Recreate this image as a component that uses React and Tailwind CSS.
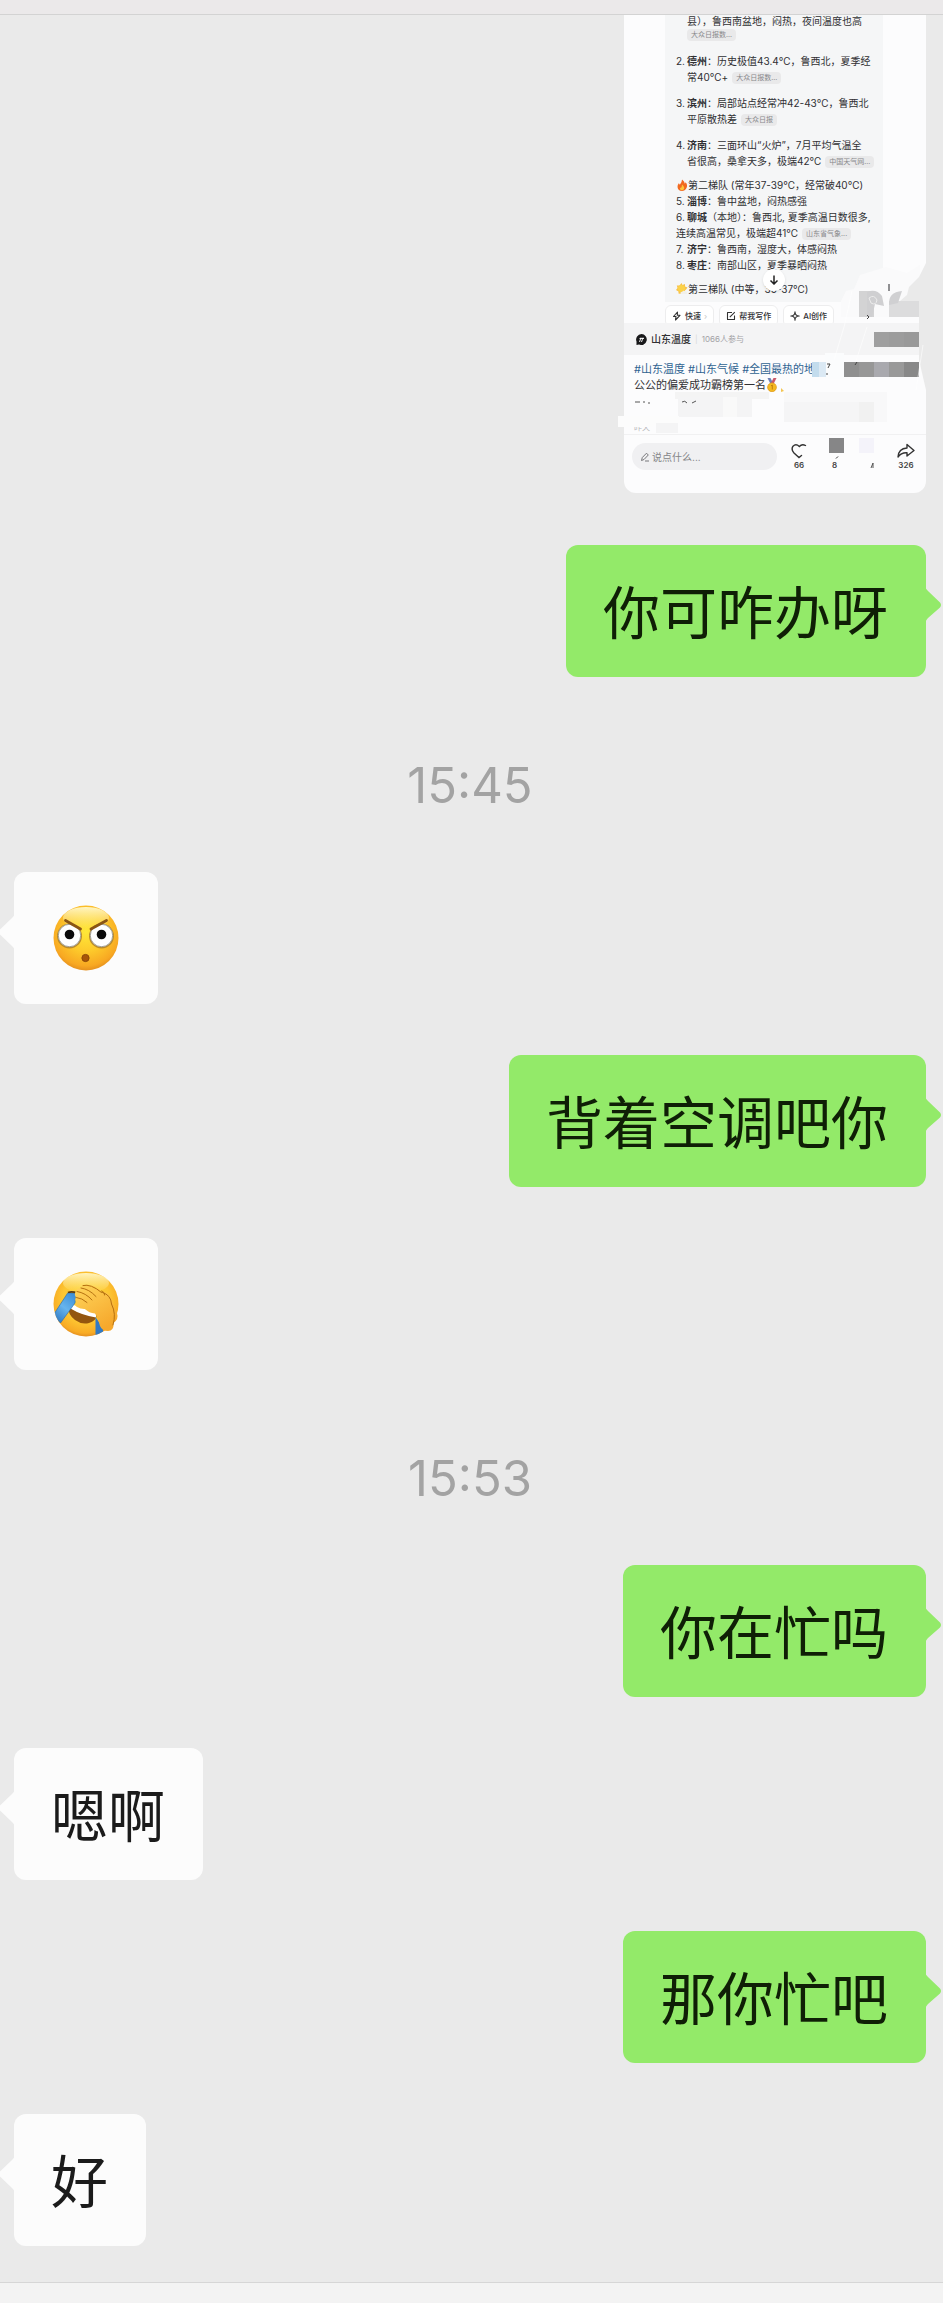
const messages = [
  { from: "me", text: "你可咋办呀" },
  { time: "15:45" },
  { from: "them", emoji: "stare" },
  { from: "me", text: "背着空调吧你" },
  { from: "them", emoji: "facepalm" },
  { time: "15:53" },
  { from: "me", text: "你在忙吗" },
  { from: "them", text: "嗯啊" },
  { from: "me", text: "那你忙吧" },
  { from: "them", text: "好" },
];

const StareEmoji = () => (
  <svg viewBox="0 0 66 66" className="w-[66px] h-[66px]" role="img" aria-label="瞪眼">
    <defs>
      <radialGradient id="stareFace" cx="50%" cy="40%" r="62%">
        <stop offset="0" stopColor="#ffe838" />
        <stop offset="0.5" stopColor="#fdc92b" />
        <stop offset="0.85" stopColor="#f8a822" />
        <stop offset="1" stopColor="#e08a1c" />
      </radialGradient>
      <linearGradient id="stareShine" x1="0" y1="0" x2="0" y2="1">
        <stop offset="0" stopColor="#fff6c4" />
        <stop offset="1" stopColor="#fff6a0" stopOpacity="0" />
      </linearGradient>
    </defs>
    <circle cx="33" cy="33" r="32.5" fill="url(#stareFace)" />
    <ellipse cx="33" cy="13" rx="23" ry="11" fill="url(#stareShine)" />
    <circle cx="16.5" cy="31" r="12.5" fill="#b98a2c" />
    <circle cx="48.5" cy="31" r="12.5" fill="#b98a2c" />
    <circle cx="16.5" cy="30.5" r="11.2" fill="#fff" stroke="#a3a29a" strokeWidth="1" />
    <circle cx="48.5" cy="30.5" r="11.2" fill="#fff" stroke="#a3a29a" strokeWidth="1" />
    <circle cx="16.5" cy="29.5" r="4.8" fill="#0b0b0b" />
    <circle cx="48.5" cy="29.5" r="4.8" fill="#0b0b0b" />
    <path d="M12.5 15.5L27.5 24M53.5 15.5L38 24" stroke="#8a5514" strokeWidth="2.8" strokeLinecap="round" />
    <circle cx="32.5" cy="53" r="3.6" fill="#a85508" stroke="#8b4708" strokeWidth="1" />
  </svg>
);

const FacepalmEmoji = () => (
  <svg viewBox="0 0 66 66" className="w-[66px] h-[66px]" role="img" aria-label="捂脸">
    <defs>
      <radialGradient id="palmFace" cx="50%" cy="42%" r="60%">
        <stop offset="0" stopColor="#ffdc3c" />
        <stop offset="0.6" stopColor="#fdc632" />
        <stop offset="0.88" stopColor="#f8ab25" />
        <stop offset="1" stopColor="#dd861f" />
      </radialGradient>
      <linearGradient id="palmShine" x1="0" y1="0" x2="0" y2="1">
        <stop offset="0" stopColor="#fff3bd" />
        <stop offset="1" stopColor="#fff09a" stopOpacity="0" />
      </linearGradient>
      <linearGradient id="palmTear" x1="0.8" y1="0" x2="0.2" y2="1">
        <stop offset="0" stopColor="#3d8fd6" />
        <stop offset="0.5" stopColor="#66b4ee" />
        <stop offset="1" stopColor="#2f77c0" />
      </linearGradient>
      <linearGradient id="palmHand" x1="0" y1="0" x2="0.6" y2="1">
        <stop offset="0" stopColor="#ffd65c" />
        <stop offset="1" stopColor="#f6a82c" />
      </linearGradient>
      <clipPath id="palmClip">
        <circle cx="33" cy="33" r="32.5" />
      </clipPath>
    </defs>
    <circle cx="33" cy="33" r="32.5" fill="url(#palmFace)" />
    <ellipse cx="33" cy="12" rx="23" ry="10" fill="url(#palmShine)" />
    <g clipPath="url(#palmClip)">
      <path d="M15 35Q28 45 44 44Q43 50 36 52Q29 54 22 49Q15 44 15 35Z" fill="#94560e" />
      <path d="M18 33L43 42V46.500Q28 44 17.500 37.500Z" fill="#fff" />
      <path d="M15 21.500L23 22.500L22 32L7.500 52L0 44.500Z" fill="url(#palmTear)" stroke="#2868a8" strokeWidth="0.6" />
      <path d="M15 21.500Q19 20 24 22" stroke="#5b3a10" strokeWidth="1.800" fill="none" />
      <path d="M42.500 46L50 57V66H42.500Z" fill="#3179c4" />
    </g>
    <path
      d="M23.500 19Q24 17 28 17Q29 13 35 14Q42 14 49 21Q55 20 58 27Q61 34 64 42Q66 48 60.500 52Q61 60 55 60Q49 60 47 55Q45 47 42 42.500Q36 42 32 38Q27 38 24 36Q21 34 24 31.500Q21 29 23 26.500Q20.500 23 23.500 19Z"
      fill="url(#palmHand)"
    />
    <path
      d="M28 17Q36 18 43 25.500M30 14.500Q38 12.500 48.500 21.500M24 20.500Q33 22 39 29M23.500 26.500Q29 27 34 31.500M49.500 21.500Q58 24 58.500 33Q63.500 43 60 54M48.500 20Q52 21 51.500 24"
      fill="none"
      stroke="#b5700f"
      strokeWidth="1"
      strokeLinecap="round"
    />
  </svg>
);

const Tail = ({ mine }) =>
  mine ? (
    <svg viewBox="0 0 16 36" className="absolute left-full top-[42px] -ml-px w-4 h-9" aria-hidden="true">
      <path d="M0 0Q1 2 3 4L15 15.500Q17 18 15 20.500L3 31Q1 33 0 36Z" fill="#93ea69" />
    </svg>
  ) : (
    <svg viewBox="0 0 16 36" className="absolute right-full top-[42px] -mr-px w-4 h-9" aria-hidden="true">
      <path d="M16 0Q15 2 13 4L1 15.500Q-1 18 1 20.500L13 32Q15 34 16 36Z" fill="#fcfcfc" />
    </svg>
  );

const Bubble = ({ message }) => {
  const mine = message.from === "me";
  return (
    <div className={mine ? "flex justify-end" : "flex justify-start"}>
      <div
        className={`relative flex items-center h-[132px] rounded-xl ${
          mine ? "bg-[#93ea69] text-[#0f1f06]" : "bg-[#fcfcfc] text-[#1b1b1b]"
        } ${message.emoji ? "px-[39px]" : "pl-[37px] pr-[38px] pb-1"}`}
      >
        <Tail mine={mine} />
        {message.emoji === "stare" && <StareEmoji />}
        {message.emoji === "facepalm" && <FacepalmEmoji />}
        {message.text && <p className="text-[57px] leading-[80px] whitespace-nowrap">{message.text}</p>}
      </div>
    </div>
  );
};

const Source = ({ children }) => (
  <span className="inline-flex items-center h-3 ml-1 px-1 rounded bg-[#e9e9ea] text-[7px] leading-3 text-[#88888b] align-middle">
    {children}
  </span>
);

const Fire = () => (
  <svg viewBox="0 0 12 12" className="w-3 h-3 shrink-0" aria-hidden="true">
    <path d="M6 .5Q9 3 8.500 4.500Q10 4 9.500 3Q12 6 10.500 9Q9 12 6 12Q2 12 1.500 8Q1.300 6 3 4Q3 5.500 4 5.500Q6 3 6 .5Z" fill="#f2691f" />
    <path d="M6 5.500Q9 8 8 10Q7 11.500 5.500 11.300Q3.500 11 4 8.500L5 9Q6 7.500 6 5.500Z" fill="#fdc53a" />
  </svg>
);

const Sun = () => (
  <svg viewBox="0 0 12 12" className="w-3 h-3 shrink-0" aria-hidden="true">
    <path d="M5.500 0L6.500 2L9 1L9 3.500L11.500 4.500L10 6.500L5 11L2.500 10.500V8.500L0 7L1.500 5L.8 2.500L3.500 2.500Z" fill="#f8c24a" />
    <circle cx="5.500" cy="5.500" r="3.600" fill="#fbd24a" />
    <path d="M4.500 11Q4 8.800 6.300 8.800Q7 7 9 8.300Q11.500 8.300 11 11Z" fill="#f1f0ea" />
  </svg>
);

const Medal = () => (
  <svg viewBox="0 0 12 14" className="w-3 h-3.5" aria-hidden="true">
    <path d="M1.500 0H4.500L7 5L4.500 6Z" fill="#6f7fb5" />
    <path d="M10.500 0H7.500L5 5L7.500 6Z" fill="#c9586a" />
    <circle cx="6" cy="9.300" r="4.400" fill="#f5b921" stroke="#dd9717" strokeWidth="0.7" />
    <path d="M5 8L6.300 7V11.500" stroke="#c27f0d" strokeWidth="1" fill="none" />
  </svg>
);

const RankItem = ({ no, city, children }) => (
  <li className="flex">
    <span className="w-[11px] shrink-0">{no}.</span>
    <p>
      <b className="font-bold">{city}</b>
      {children}
    </p>
  </li>
);

const chips = [
  {
    label: "快速",
    icon: <path d="M5.500 1L1.500 5.500H4L3.500 9L8 4.300H5.300Z" />,
    more: true,
  },
  {
    label: "帮我写作",
    icon: <path d="M6 1.500H1.500V8.500H8.500V4.500M3.800 6.200L8.800 1.200" />,
  },
  {
    label: "AI创作",
    icon: <path d="M5 .8Q5 5 9.200 5Q5 5 5 9.200Q5 5 .8 5Q5 5 5 .8Z" />,
  },
];

// mosaic blocks painted over the private parts of the shared picture
const blocks = [
  [250, 317, 15, 15, "#9f9f9f"],
  [265, 317, 15, 15, "#9c9c9c"],
  [280, 317, 15, 15, "#999999"],
  [220, 347, 15, 15, "#8f8f8f"],
  [235, 347, 16, 15, "#979797"],
  [250, 347, 15, 15, "#a9a9ae"],
  [265, 347, 15, 15, "#999999"],
  [280, 347, 15, 15, "#888888"],
  [201, 338, 19, 26, "#fbfcfd"],
  [188, 347, 7, 15, "#c3dced"],
  [195, 347, 7, 15, "#dbe9f4"],
  [235, 276, 15, 26, "#d3d3d4"],
  [265, 286, 30, 16, "#dcdcdd"],
  [51, 377, 94, 7, "#f4f4f4"],
  [160, 377, 103, 30, "#f8f8f9"],
  [54, 382, 45, 20, "#f4f4f5"],
  [99, 382, 14, 20, "#f9f9f9"],
  [113, 382, 15, 20, "#f4f4f5"],
  [160, 387, 75, 20, "#f5f5f6"],
  [235, 387, 15, 20, "#f1f1f1"],
  [32, 408, 22, 10, "#f4f4f5"],
  [205, 423, 15, 15, "#868687"],
  [235, 423, 15, 15, "#f4f3fa"],
];

const Mosaic = () => (
  <svg viewBox="0 0 302 478" className="absolute inset-0 w-full h-full overflow-visible" aria-hidden="true">
    <path d="M217 302V286L222 276L230 274L236 260L262 252L283 258L296 250V302Z" fill="#fafafb" />
    {blocks.map(([x, y, w, h, fill]) => (
      <rect key={`${x}-${y}`} x={x} y={y} width={w} height={h} fill={fill} />
    ))}
    <path d="M243 277Q252 273 258 281L260 291L251 289L248 302H243Z" fill="#cfcfd1" />
    <path d="M245 283Q250 279 253 285Q252 291 247 288Z" fill="none" stroke="#ececec" />
    <path d="M265 290Q264 277 278 276L274 288Z" fill="#d0d0d2" />
    <path d="M302 248L295 262L285 272L283 280L276 286H295V345L302 375Z" fill="#eaeaea" />
    <rect x="264" y="269" width="2" height="7" fill="#8f8f92" />
    <path d="M243 300L245 302L243 304M203 349H206L204 353M203 358V360M231 350L233 347" stroke="#444" fill="none" />
    <path d="M228 276Q222 310 210 345M243 312L232 346M299 330L292 375" stroke="#fff" strokeWidth="1" strokeOpacity="0.6" fill="none" />
    <path d="M-6 401H55V408H32L28 412H-6Z" fill="#fcfcfc" />
    <path d="M11 387H16M19 387H21M24 388H26M58 387Q61 385 63 388M68 388L72 386" stroke="#555" strokeWidth="1" fill="none" />
    <path d="M157 373L160 376L157 377Z" fill="#f3c553" />
  </svg>
);

const SharedPicture = () => (
  <div className="relative self-end w-[302px] h-[478px] rounded-b-xl bg-[#fcfcfd] text-[#303033] font-[Inter,'Noto_Sans_CJK_SC',sans-serif]">
    <div className="flex flex-col h-full overflow-hidden rounded-b-xl">
      <div className="ml-[41px] w-[218px] h-[287px] shrink-0 bg-[#f5f6f7] pl-[11px]">
        <div className="text-[10px] leading-4 whitespace-nowrap">
          <div className="pl-[11px]">
            <p className="leading-3">县），鲁西南盆地，闷热，夜间温度也高</p>
            <div className="-ml-1 h-4 flex items-center">
              <Source>大众日报数...</Source>
            </div>
          </div>
          <ol className="mt-2.5 flex flex-col gap-2.5">
            <RankItem no={2} city="德州">
              ：历史极值43.4℃，鲁西北，夏季经
              <br />
              常40℃+<Source>大众日报数...</Source>
            </RankItem>
            <RankItem no={3} city="滨州">
              ：局部站点经常冲42-43℃，鲁西北
              <br />
              平原散热差<Source>大众日报</Source>
            </RankItem>
            <RankItem no={4} city="济南">
              ：三面环山“火炉”，7月平均气温全
              <br />
              省很高，桑拿天多，极端42℃<Source>中国天气网...</Source>
            </RankItem>
          </ol>
          <p className="mt-2 flex items-center">
            <Fire />
            第二梯队 (常年37-39℃，经常破40℃)
          </p>
          <ol>
            <RankItem no={5} city="淄博">：鲁中盆地，闷热感强</RankItem>
            <RankItem no={6} city="聊城">（本地）：鲁西北, 夏季高温日数很多,</RankItem>
            <li className="list-none">
              连续高温常见，极端超41℃<Source>山东省气象...</Source>
            </li>
            <RankItem no={7} city="济宁">：鲁西南，湿度大，体感闷热</RankItem>
            <RankItem no={8} city="枣庄">：南部山区，夏季暴晒闷热</RankItem>
          </ol>
          <div className="relative mt-2">
            <p className="flex items-center">
              <Sun />
              第三梯队 (中等，35-37℃)
            </p>
            <button
              type="button"
              aria-label="滚动到底部"
              className="absolute left-[87px] -top-3 flex items-center justify-center w-[22px] h-[22px] rounded-full bg-white shadow-sm"
            >
              <svg viewBox="0 0 10 10" className="w-2.5 h-2.5" fill="none" stroke="#222" strokeWidth="1.500">
                <path d="M5 .5V9M1.500 5.500L5 9L8.500 5.500" />
              </svg>
            </button>
          </div>
        </div>
      </div>

      <div className="flex shrink-0 gap-[5px] h-[21px] pt-[3px] pl-[41px] overflow-hidden">
        {chips.map((chip) => (
          <button
            key={chip.label}
            type="button"
            className="flex shrink-0 items-center gap-[3px] h-[22px] px-1.5 rounded-md border border-[#ededee] bg-white text-[8px] leading-3 font-medium whitespace-nowrap"
          >
            <svg viewBox="0 0 10 10" className="w-2.5 h-2.5" fill="none" stroke="#333" strokeWidth="1.100" strokeLinejoin="round">
              {chip.icon}
            </svg>
            {chip.label}
            {chip.more && <span className="text-[#ccc]">›</span>}
          </button>
        ))}
      </div>

      <div className="flex shrink-0 items-center h-8 pl-3 bg-[#f4f4f5]">
        <svg viewBox="0 0 11 11" className="w-[11px] h-[11px]" aria-hidden="true">
          <path d="M5.500 0A5.500 5.500 0 1 1 3 10.500L.5 11V7.500A5.500 5.500 0 0 1 5.500 0Z" fill="#18181a" />
          <path d="M3.500 8L5 3.500M5.500 8L7 3.500M3.500 4.500H8" stroke="#fff" strokeWidth="0.900" />
        </svg>
        <span className="ml-1 text-[10px] leading-4 font-medium">山东温度</span>
        <span className="ml-1 text-[8px] text-[#d8d8d8]">|</span>
        <span className="ml-1 text-[8px] leading-4 text-[#a2a2a5]">1066人参与</span>
      </div>

      <div className="pt-1.5 pl-2.5 text-[11px] leading-4 whitespace-nowrap">
        <p className="text-[#2f6391]">
          <a href="#sdwd">#山东温度</a> <a href="#sdqh">#山东气候</a> <a href="#zrdd">#全国最热的地</a>
        </p>
        <p className="flex items-center">
          公公的偏爱成功霸榜第一名
          <Medal />
        </p>
        <p className="mt-7 text-[8px] leading-3 text-[#b5b5b8]">昨天</p>
      </div>

      <div className="mt-auto flex items-start justify-between h-[59px] pt-2 pl-2 pr-2.5 border-t border-[#f1f1f2]">
        <label className="flex items-center gap-0.5 w-[145px] h-[27px] pl-2 rounded-full bg-[#f0f0f2]">
          <svg viewBox="0 0 10 10" className="w-2.5 h-2.5 shrink-0" fill="none" stroke="#77777a" strokeWidth="1">
            <path d="M1.500 8.500L2.300 5.500L6.500 1.200L8.300 3L4 7.500L1.500 8.500ZM5 9H9" />
          </svg>
          <input
            type="text"
            aria-label="评论"
            placeholder="说点什么..."
            className="w-full bg-transparent text-[10px] leading-4 outline-none placeholder:text-[#858588]"
          />
        </label>
        <div className="flex justify-between w-[127px] text-[8px] leading-3 font-semibold text-[#444]">
          <button type="button" aria-label="喜欢" className="flex flex-col items-center w-5">
            <svg viewBox="0 0 16 16" className="w-4 h-4" fill="none" stroke="#333" strokeWidth="1.400" strokeLinecap="round">
              <path d="M14.500 2.500Q11 .5 8.300 3.500Q5 .3 2 3.200Q-.2 6.500 3 10L8 14.500L10.500 12.500" />
            </svg>
            66
          </button>
          <button type="button" aria-label="收藏" className="flex flex-col items-center w-5">
            <svg viewBox="0 0 16 16" className="w-4 h-4" fill="none" stroke="#333" strokeWidth="1">
              <path d="M9 15.500L11 13.500" />
            </svg>
            8
          </button>
          <svg viewBox="0 0 20 28" className="w-5 h-7" fill="none" stroke="#555" strokeWidth="1" aria-hidden="true">
            <path d="M11 25L13 20V25" />
          </svg>
          <button type="button" aria-label="分享" className="flex flex-col items-center w-5">
            <svg viewBox="0 0 18 16" className="w-[18px] h-4" fill="none" stroke="#333" strokeWidth="1.400" strokeLinejoin="round">
              <path d="M10 1.500L17 7.500L10 13V9.800Q4 9.500 1 14Q1.500 5.500 10 5Z" />
            </svg>
            326
          </button>
        </div>
      </div>
    </div>
    <Mosaic />
  </div>
);

const App = () => {
  return (
    <div className="flex flex-col min-h-screen bg-[#eaeaea] font-['Noto_Sans_CJK_SC',sans-serif]">
      <header className="h-[15px] shrink-0 bg-[#ebe9ea] border-b border-[#d3d3d3]" />
      <main className="flex flex-col flex-1 gap-[51px] pl-3.5 pr-[17px] pb-9 overflow-hidden">
        <div className="flex flex-col pb-px">
          <SharedPicture />
        </div>
        {messages.map((message, i) =>
          message.time ? (
            <time
              key={i}
              className="block mt-[34px] mb-[11px] text-center text-[49px] leading-[48px] text-[#a3a3a3] font-[Inter,sans-serif]"
            >
              {message.time}
            </time>
          ) : (
            <Bubble key={i} message={message} />
          )
        )}
      </main>
      <footer className="h-[21px] shrink-0 bg-[#f3f3f3] border-t border-[#d6d6d6]" />
    </div>
  );
};

export default App;
